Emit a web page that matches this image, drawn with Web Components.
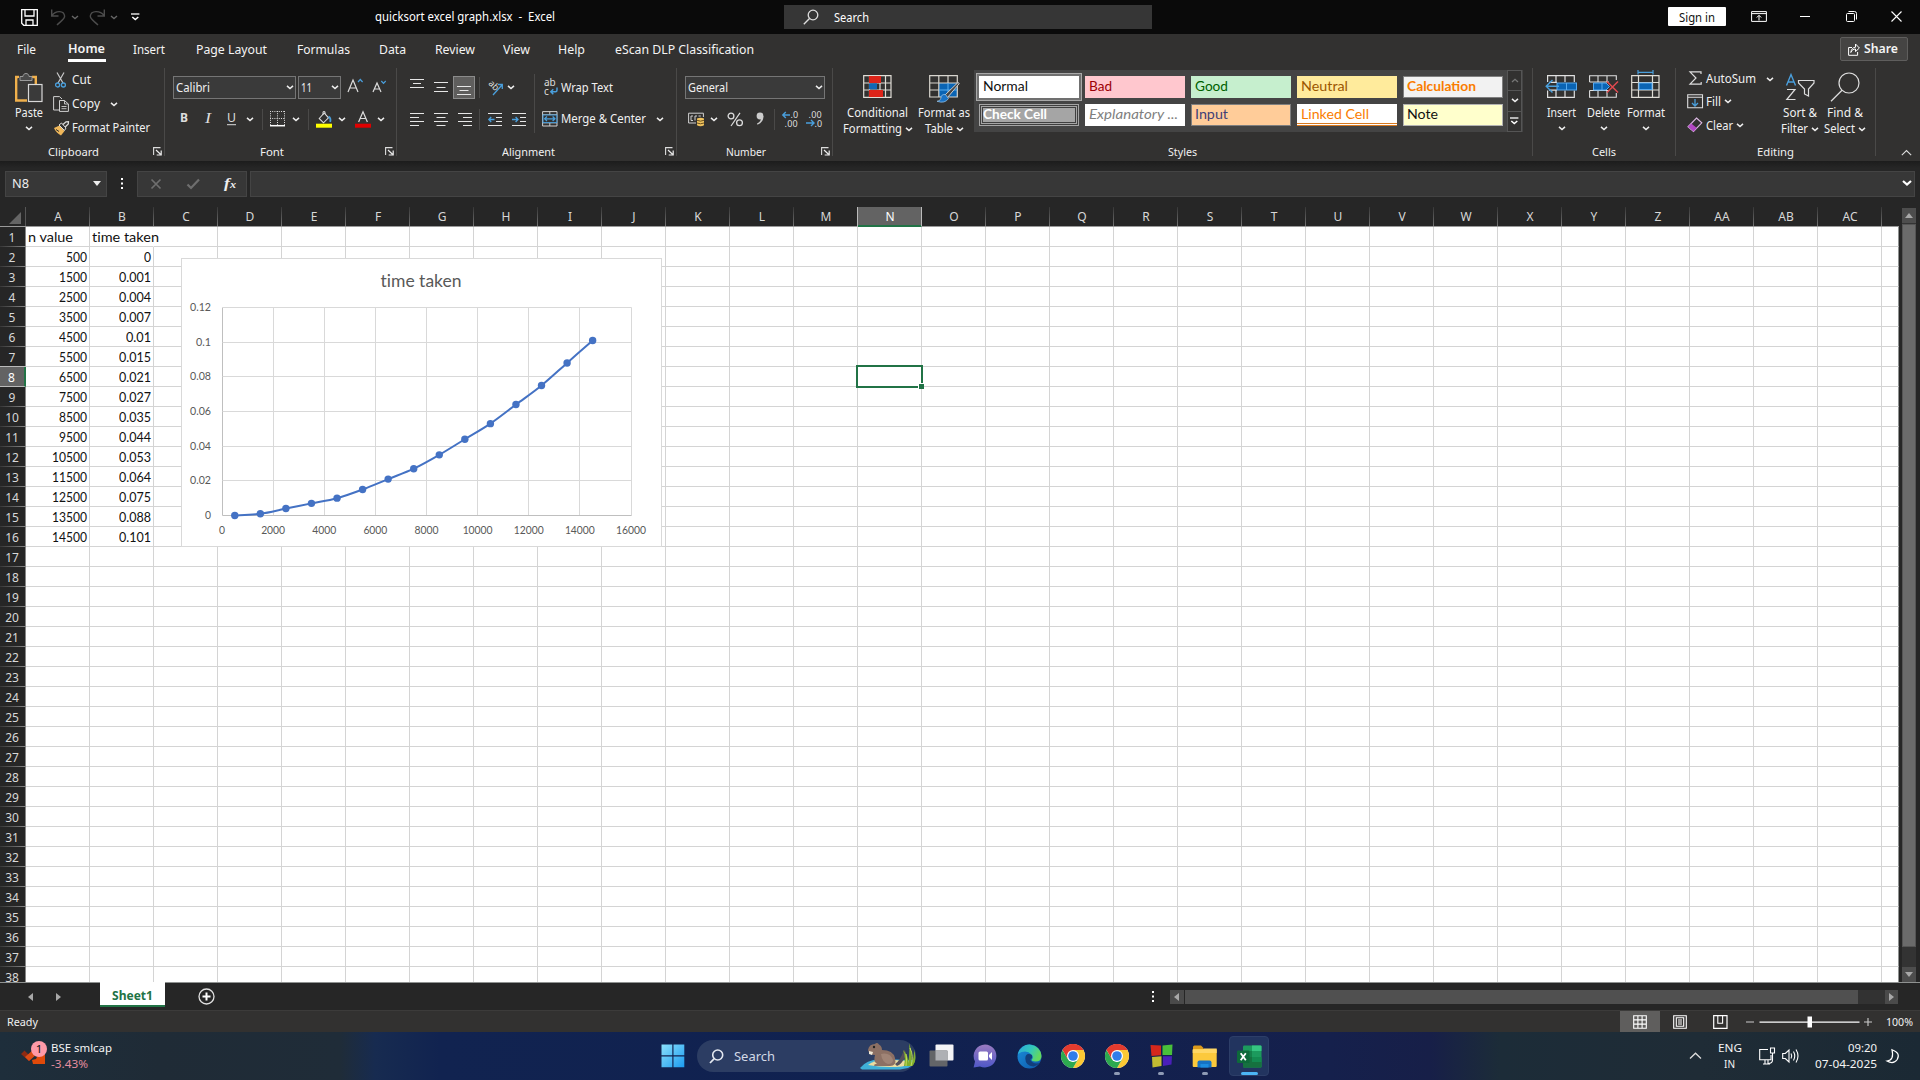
<!DOCTYPE html>
<html lang="en">
<head>
<meta charset="utf-8">
<title>quicksort excel graph.xlsx - Excel</title>
<style>
html,body{margin:0;padding:0;background:#262626;overflow:hidden}
</style>
</head>
<body>
<excel-app></excel-app>
<script>
/* ---------- icon set: [width, height, markup] ---------- */
const W='#e6e6e6', B='#4a9fdc';
const hl=(list,c=W)=>list.map(([x1,x2,y])=>`<path d="M${x1} ${y}H${x2}" stroke="${c}"/>`).join('');
const chrome=`<circle cx="12" cy="12" r="12" fill="#fff"/>
<path d="M12 12L1.6 6A12 12 0 0 1 22.4 6z" fill="#e33b2e"/><path d="M12 6H22.4A12 12 0 0 1 12 24L17.2 15z" fill="#fcc934"/>
<path d="M1.6 6L6.8 15L12 18L17.2 15L12 24A12 12 0 0 1 1.6 6z" fill="#2da94f"/><path d="M1.6 6A12 12 0 0 1 22.4 6H12V12L6.8 15z" fill="#e33b2e"/>
<circle cx="12" cy="12" r="6" fill="#fff"/><circle cx="12" cy="12" r="4.8" fill="#2f7de9"/>`;
const ICONS={
chev:[8,5,`<path d="M1 .9L4 3.6L7 .9" stroke="#eee" stroke-width="1.5"/>`],
chevd:[8,5,`<path d="M1 .9L4 3.6L7 .9" stroke="#666" stroke-width="1.3"/>`],
chevu:[8,5,`<path d="M1 4L4 1.3L7 4" stroke="#777" stroke-width="1.3"/>`],
chevb:[10,6,`<path d="M1 1L5 4.6L9 1" stroke="#fff" stroke-width="2.2"/>`],
chevup:[13,8,`<path d="M1 6.5L6.5 1.2L12 6.5" stroke="#ddd" stroke-width="1.3"/>`],
tri:[8,5,`<path d="M0 0H8L4 5z" fill="#eee"/>`],
dots:[3,12,`<path d="M0 0h2v2H0zM0 4.5h2v2H0zM0 9h2v2H0z" fill="#fff"/>`],
save:[17,17,`<path d="M.7.7H16.3V16.3H2.7L.7 14.3z" stroke="#fff" stroke-width="1.3"/><path d="M4 .7V7H13V.7M5 16V11H12V16" stroke="#fff" stroke-width="1.3"/>`],
undo:[15,17,`<path d="M.7.5V7H7.5M1 6.5C5 1 13 1.5 13.6 7C14 10 10 12 6 16" stroke="#4c4c4c" stroke-width="1.4"/>`],
redo:[16,17,`<path d="M15.3.5V7H8.5M15 6.5C11 1 2 1.5 1.3 7C1 10 5 12 9 16" stroke="#4c4c4c" stroke-width="1.4"/>`],
qat:[9,8,`<path d="M0 1H8.4" stroke="#fff" stroke-width="1.3"/><path d="M1.3 4L4.3 6.6L7.3 4" stroke="#fff" stroke-width="1.5"/>`],
mag:[16,16,`<circle cx="10" cy="6" r="4.8" stroke="#ddd" stroke-width="1.3"/><path d="M6.5 9.5L.8 15.2" stroke="#ddd" stroke-width="1.4"/>`],
ribopt:[16,11,`<path d="M.6.6H15.4V10.4H.6zM.6 2.6H15.4" stroke="#fff"/><path d="M8 9.5V4.5M5.8 6.5L8 4.3L10.2 6.5" stroke="#fff"/>`],
min:[11,2,`<path d="M0 .5H10" stroke="#fff"/>`],
rest:[11,11,`<rect x=".5" y="2.5" width="8" height="8" rx="1" stroke="#fff"/><path d="M2.5 .5H8.5Q10.5.5 10.5 2.5V8.5" stroke="#fff"/>`],
close:[11,11,`<path d="M.5.5L10.5 10.5M10.5.5L.5 10.5" stroke="#fff" stroke-width="1.1"/>`],
share:[12,13,`<path d="M4 4.5H.6V12.3H9.6V9" stroke="#fff"/><path d="M2.8 9.5C3.3 6 5 4.3 7.5 4.2V1L11.4 5L7.5 8.6V6C5.5 6 4 7 2.8 9.5z" stroke="#fff"/>`],
paste:[28,30,`<path d="M4 5H1.2V28.5H12" stroke="#f0b04c" stroke-width="2.4"/><path d="M17 5H20.8V12" stroke="#f0b04c" stroke-width="2.4"/><rect x="3" y="6" width="15" height="21" fill="#3a3938"/><path d="M5 8.5V4.5H8C8 .5 14 .5 14 4.5H17V8.5z" fill="#4a4a4a" stroke="#9a9a9a"/><rect x="13.5" y="12.5" width="13.5" height="17" fill="#3a3a3a" stroke="#d8d8d8" stroke-width="1.2"/>`],
cut:[11,16,`<path d="M2 .5L8 11M9 .5L3 11" stroke="#c8c8c8" stroke-width="1.2"/><circle cx="2.6" cy="13" r="2" stroke="${B}" stroke-width="1.3"/><circle cx="8.4" cy="13" r="2" stroke="${B}" stroke-width="1.3"/>`],
copy:[16,16,`<path d="M6 14H.6V.6H6.5L9 3" stroke="#d0d0d0"/><path d="M6.5 4.5H11.5L15.4 8V15.4H6.5z" fill="#323130" stroke="#d0d0d0"/><path d="M11.5 4.5V8H15.4M8.5 10.5H13.5M8.5 12.7H13.5" stroke="#d0d0d0" stroke-width=".9"/>`],
brush:[17,15,`<path d="M1 7L6.5 4.5L11.5 10L8 14.5Q3 12 1 7z" fill="#efb75a"/><path d="M6 4L8.5 2L13 7L11.5 9.5z" fill="#323130" stroke="#ddd"/><path d="M10 3.5L13 .8L15.5.6L15.3 3L12.2 6" stroke="#ddd" stroke-width="1.2"/><path d="M3 8.5L6 10.5" stroke="#323130"/>`],
launch:[10,9,`<path d="M7.5.6H.6V8" stroke="#ddd" stroke-width="1.1"/><path d="M3 3L7.5 7.2M8.2 3.5V8H3.7" stroke="#eee" stroke-width="1.2"/>`],
grow:[17,15,`<path d="M1 14L6 2L11 14M2.8 10H9.2" stroke="#ddd" stroke-width="1.2"/><path d="M11 4L13.3 1.5L15.6 4" stroke="${B}" stroke-width="1.2"/>`],
shrink:[15,13,`<path d="M1 12L5 3L9 12M2.4 9H7.6" stroke="#ddd" stroke-width="1.2"/><path d="M9.3 1L11.5 3.3L13.7 1" stroke="${B}" stroke-width="1.2"/>`],
bord:[15,16,`<path d="M.5 0V15M14.5 0V15M0 .5H15M7.5 0V15M0 7.5H15" stroke="#ddd" stroke-dasharray="1 1.2"/><path d="M0 14.7H15" stroke="#fff" stroke-width="1.5"/>`],
fill:[17,17,`<path d="M3.2 7.5L8.2 2L12.5 6.8L7.5 11.8z" stroke="#ddd" stroke-width="1.1"/><path d="M7 4V.7H9V3" stroke="#ddd"/><path d="M12.5 5.5Q15.2 7 14.2 11" stroke="${B}" stroke-width="1.8"/><rect y="12.7" width="16" height="4" fill="#ffff00"/>`],
fcol:[17,17,`<path d="M3.6 11L8 .8L12.4 11M5.2 7.5H10.8" stroke="#ddd" stroke-width="1.2"/><rect y="12.7" width="16" height="4" fill="#e00000"/>`],
at:[15,11,hl([[0,14,.5],[3,11,4.5],[0,14,8.5]])],
am:[15,11,hl([[0,14,.5],[2.5,11.5,5.5],[0,14,9.5]])],
ab:[15,11,hl([[0,14,1.5],[2.5,11.5,5.5],[0,14,9.5]])],
al:[15,15,hl([[0,14,1.5],[0,9,5.5],[0,14,9.5],[0,9,13.5]])],
ac:[15,15,hl([[0,14,1.5],[2.5,11.5,5.5],[0,14,9.5],[2.5,11.5,13.5]])],
ar:[15,15,hl([[0,14,1.5],[5,14,5.5],[0,14,9.5],[5,14,13.5]])],
orient:[17,17,`<text transform="translate(1,5) rotate(45)" font-family="Noto Sans" font-size="9.5" fill="#ddd" textLength="10.5" lengthAdjust="spacingAndGlyphs">ab</text><path d="M6 16L15 6M10.8 5.5H15.3V10" stroke="${B}" stroke-width="1.3"/>`],
outd:[15,15,hl([[0,14,1.5],[8,14,5.5],[8,14,9.5],[0,14,13.5]])+`<path d="M6.5 7.5H.8M3.2 5L.8 7.5L3.2 10" stroke="${B}" stroke-width="1.3"/>`],
ind:[15,15,hl([[0,14,1.5],[8,14,5.5],[8,14,9.5],[0,14,13.5]])+`<path d="M0 7.5H6M3.6 5L6 7.5L3.6 10" stroke="${B}" stroke-width="1.3"/>`],
wrap:[15,17,`<text x="0" y="7" font-family="Noto Sans" font-size="10" fill="#ddd">ab</text><text x="0" y="15.5" font-family="Noto Sans" font-size="10" fill="#ddd">c</text><path d="M13 8.5V11Q13 12.8 11.5 12.8H7M9.3 10.3L6.8 12.8L9.3 15.3" stroke="${B}" stroke-width="1.5"/>`],
merge:[16,16,`<path d="M.6.6H15V15H.6zM.6 3.8H15M.6 11.8H15M7.8.6V3.8M7.8 11.8V15" stroke="#d0d0d0"/><rect x="1" y="4" width="13.8" height="7.6" fill="#323130" stroke="${B}"/><path d="M2.5 7.8H13M5 5.5L2.6 7.8L5 10M10.6 5.5L13 7.8L10.6 10" stroke="${B}" stroke-width="1.2"/>`],
cur:[17,15,`<path d="M8 11H.6V1.2H15.4V5" stroke="#d0d0d0"/><path d="M5 4H3V8.5H5M7 8.5V4H9M10.5 4H12.8" stroke="#d0d0d0"/><path d="M9 6.5Q12.5 5 16 6.5V13.3Q12.5 15 9 13.3z" fill="#f0c35f"/><path d="M9 8.3Q12.5 10 16 8.3M9 11Q12.5 12.6 16 11" stroke="#6a501c"/>`],
pct:[17,15,`<circle cx="4" cy="4" r="2.9" stroke="#ddd" stroke-width="1.3"/><circle cx="12.5" cy="10.8" r="2.9" stroke="#ddd" stroke-width="1.3"/><path d="M13 .8L4 14" stroke="#ddd" stroke-width="1.2"/>`],
comma:[9,14,`<circle cx="4" cy="4" r="3.4" fill="#ccc"/><path d="M7.4 4Q7.8 10 1.5 12.8L1 11.5Q5 9.5 5 6z" fill="#ccc"/>`],
decl:[17,16,`<text x="8.6" y="6.8" font-family="Noto Sans" font-size="9" fill="#ddd">.0</text><text x="2.6" y="15.6" font-family="Noto Sans" font-size="9" fill="#ddd" textLength="13">.00</text><path d="M8 4H.8M3.8 1L.8 4L3.8 7" stroke="${B}" stroke-width="1.4"/>`],
decr:[17,16,`<text x="2.6" y="6.8" font-family="Noto Sans" font-size="9" fill="#ddd" textLength="13">.00</text><text x="8.6" y="15.6" font-family="Noto Sans" font-size="9" fill="#ddd">.0</text><path d="M0 12H8M5 9L8 12L5 15" stroke="${B}" stroke-width="1.4"/>`],
cond:[29,23,`<path d="M.7.7H28V22.3H.7zM.7 8H28M.7 15H28M6.5.7V22M17 .7V22M22.5.7V22" stroke="#e0ddd6" stroke-width="1.2"/><rect x="6" y="1" width="12" height="7" fill="#dd2419"/><rect x="6" y="8.3" width="8" height="6" fill="#1267b4"/><rect x="6" y="15" width="14" height="7" fill="#dd2419"/>`],
fmt:[31,28,`<rect x="10" y="8" width="18" height="14" fill="#0a64b4"/><path d="M.7.7H28.3V22H.7zM.7 8H28.3M.7 15H10M9.8.7V22M19 .7V8" stroke="#d8d5ce" stroke-width="1.2"/><path d="M10 15H28M19 8V22" stroke="#58aef0"/><path d="M29 7.5L16 20L18.5 22.5L30.3 8.5z" fill="#444" stroke="#ccc"/><path d="M16.5 19.5Q12 19 12 23Q11.5 26 8 26.3Q16 29 19.5 23.5z" fill="#1a72c4" stroke="#9fc8ea" stroke-width=".7"/>`],
ins:[33,23,`<path d="M2.6 7V.7H29.3V7M2.6 15.5V22.3H29.3V15.5M11 .7V7M20 .7V7M11 15.5V22.3M20 15.5V22.3M4 7.4H12M4 15.2H12" stroke="#e0e0e0" stroke-width="1.2"/><rect x="12" y="8" width="19.5" height="7" fill="#0a64b4" stroke="#57aaf0"/><path d="M21.5 8V15" stroke="#57aaf0"/><path d="M1 11.3H14M7.5 5L1.2 11.3L7.5 17.6" stroke="${B}" stroke-width="1.4"/>`],
del:[32,23,`<path d="M1.6 7V.7H28.3V5M1.6 15.5V22.3H28.3V18M10 .7V7M19 .7V7M10 15.5V22.3M19 15.5V22.3M1.6 7H21M1.6 15.5H21" stroke="#e0e0e0" stroke-width="1.1"/><path d="M5.5 8H18L21.5 11.5L18 15H5.5z" fill="#0a64b4" stroke="#57aaf0"/><path d="M14 8V15" stroke="#57aaf0"/><path d="M19 6.5L30 17.5M30 6.5L19 17.5" stroke="#e04a50" stroke-width="1.5"/>`],
form:[29,28,`<path d="M7 2.3H22M7 0V4.6M22 0V4.6" stroke="${B}" stroke-width="1.2"/><path d="M.7 5.7H28V27.3H.7zM.7 12.5H28M.7 20H28M7.5 5.7V27M21.5 5.7V27" stroke="#e0ddd6" stroke-width="1.2"/><rect x="8" y="13" width="13" height="6.5" fill="#0a64b4" stroke="#57aaf0"/>`],
sum:[13,14,`<path d="M12 3V.8H1L7 7L1 13.2H12.2V11" stroke="#ddd" stroke-width="1.2"/>`],
dfill:[17,15,`<path d="M.7.7H15.5V13.8H.7zM.7 3.3H15.5" stroke="#ddd" stroke-width="1.1"/><path d="M8 5V12M5 9L8 12L11 9" stroke="${B}" stroke-width="1.3"/>`],
clear:[16,16,`<path d="M9.5 1L14.8 5.8L6.5 14.5L1 9.8z" stroke="#dcb8e4" stroke-width="1.1"/><path d="M4.3 6.5L9.8 11L6.5 14.5L1 9.8z" fill="#b146c2"/>`],
sort:[30,28,`<path d="M1.5 12.5L6 1.5L10.5 12.5M3 9H9" stroke="${B}" stroke-width="1.4"/><path d="M2 16.5H10L1.8 26.5H10.5" stroke="#ddd" stroke-width="1.2"/><path d="M13.5 7.5H29V10L23.5 16V23L19.5 21V16L13.5 10z" stroke="#ddd" stroke-width="1.2"/>`],
find:[30,30,`<circle cx="19" cy="11" r="10" stroke="#ddd" stroke-width="1.2"/><path d="M12 18.3L1 29.3" stroke="#ddd" stroke-width="1.3"/>`],
x:[12,12,`<path d="M1.5 1.5L10.5 10.5M10.5 1.5L1.5 10.5" stroke="#6e6e6e" stroke-width="1.7"/>`],
check:[15,12,`<path d="M1.5 6.5L5 10L13 1.5" stroke="#6e6e6e" stroke-width="2.2"/>`],
corner:[12,12,`<path d="M12 0V12H0z" fill="#656565"/>`],
up:[8,5,`<path d="M0 5L4 0L8 5z" fill="#a8a8a8"/>`],
dn:[8,5,`<path d="M0 0H8L4 5z" fill="#a8a8a8"/>`],
lt:[5,8,`<path d="M5 0V8L0 4z" fill="#a8a8a8"/>`],
rt:[5,8,`<path d="M0 0V8L5 4z" fill="#a8a8a8"/>`],
plus:[17,17,`<circle cx="8.5" cy="8.5" r="7.5" stroke="#e0e0e0" stroke-width="1.3"/><path d="M8.5 4.5V12.5M4.5 8.5H12.5" stroke="#fff" stroke-width="2"/>`],
vnorm:[14,14,`<path d="M.7.7H13.3V13.3H.7zM4.9.7V13.3M9.1.7V13.3M.7 4.9H13.3M.7 9.1H13.3" stroke="#fff" stroke-width="1.1"/>`],
vpage:[14,14,`<path d="M.7.7H13.3V13.3H.7zM3.3 2.8H10.7V11.2H3.3z" stroke="#fff" stroke-width="1.1"/><path d="M5 5H9M5 7H9M5 9H9" stroke="#fff"/>`],
vbreak:[15,14,`<path d="M.7.7H14V13.3H.7z" stroke="#fff" stroke-width="1.2"/><path d="M4.8.7V8.3H9.6V.7M9.6 8.3H10" stroke="#fff" stroke-width="1.1"/>`],
zoom:[126,13,`<path d="M0 7H8M118 7H126M122 3V11" stroke="#ccc" stroke-width="1.1"/><path d="M13.5 7.2H113.5" stroke="#fff" stroke-width="1.2"/><rect x="61.5" y="1.5" width="4.5" height="11" fill="#fff"/>`],
stock:[26,24,`<path d="M0 13L3.5 9.5L8 14L14 7L17 11L8 20z" fill="#8e2a12"/><path d="M4 16L12 9L16 13L8 20z" fill="#d94b16"/><path d="M12 23L11 19L15 18L17 14H24V23z" fill="#e04a0a"/><circle cx="18" cy="8" r="8" fill="#ff9aa8"/><text x="18" y="12" font-family="Noto Sans" font-size="11.5" fill="#111" text-anchor="middle">1</text>`],
win:[24,24,`<defs><linearGradient id="wg" x1="0" y1="0" x2="1" y2="1"><stop offset="0" stop-color="#8be0fb"/><stop offset="1" stop-color="#1b9bf0"/></linearGradient></defs><path d="M.5.5H11.3V11.3H.5zM12.5.5H23.3V11.3H12.5zM.5 12.5H11.3V23.3H.5zM12.5 12.5H23.3V23.3H12.5z" fill="url(#wg)"/>`],
smag:[15,15,`<circle cx="8.7" cy="6" r="5" stroke="#e4e8f0" stroke-width="1.6"/><path d="M5 9.8L1 14" stroke="#e4e8f0" stroke-width="1.8"/>`],
beaver:[57,28,`<path d="M0 26Q6 18 20 17L52 18Q56 22 48 26L40 27.5H2z" fill="#3fb0d8"/><path d="M8 23Q14 18 26 17.5L50 19Q52 23 42 24.5Q24 26 8 23z" fill="#ecdca0"/><path d="M35 22Q40 19 44 8Q47 9 45 15Q42 22 37 24z" fill="#55505c"/><path d="M8 8Q9 2 15 2Q17 0 19 2.5Q22 4 22 8Q33 8 35 16Q37 24 30 24H15Q12 23 17 21.5Q13 20 15 13Q9 13 8 8z" fill="#8c7064"/><path d="M21 12Q30 10 33 18Q33 22 28 22Q22 20 21 12z" fill="#a08476"/><circle cx="14" cy="5" r="1.2" fill="#222"/><path d="M9 9L13 10L12 13L9 12z" fill="#f2ead8"/><path d="M44 24Q46 14 43 8Q49 14 48 22Q50 12 49 1Q53 10 51 22Q55 14 54 7Q57 16 54 24z" fill="#7fae2e"/><path d="M46 24Q47 16 46 12M51 24Q54 14 50 6" stroke="#c4dc5a"/>`],
tview:[25,24,`<rect x="6.5" y=".5" width="18" height="16" rx="1" fill="#f4f4f6"/><rect x=".5" y="6.5" width="18" height="16" rx="1" fill="#636568"/><rect x="6.5" y="6.5" width="12" height="10" fill="#aeb0b4"/>`],
chat:[24,24,`<defs><linearGradient id="cg" x1="0" y1="0" x2="0" y2="1"><stop offset="0" stop-color="#9a7bc0"/><stop offset="1" stop-color="#4f58c8"/></linearGradient></defs><path d="M12 .5A11.5 11.5 0 1 1 7 22.4L.6 23.4L2 17.5A11.5 11.5 0 0 1 12 .5z" fill="url(#cg)"/><rect x="5.5" y="7.5" width="9.5" height="9" rx="1.5" fill="#fff"/><path d="M16 11L19 8V16L16 13z" fill="#fff"/>`],
edge:[25,25,`<defs><linearGradient id="eg" x1="0" y1="0" x2="1" y2=".4"><stop offset="0" stop-color="#2aa7e0"/><stop offset=".6" stop-color="#34c8b8"/><stop offset="1" stop-color="#62d860"/></linearGradient><linearGradient id="eb" x1="0" y1="0" x2="1" y2="1"><stop offset="0" stop-color="#1b8fdc"/><stop offset="1" stop-color="#0d57a8"/></linearGradient></defs><circle cx="12.5" cy="12.5" r="12" fill="url(#eb)"/><path d="M15 10.8Q8.5 8 8.3 14.5Q8.5 22 16.5 22.5Q20.5 22 22.5 19Q16 20.5 13.5 16Q13.2 14.5 15 14.2z" fill="#123f7c"/><path d="M.8 10A12 12 0 0 1 24.5 12Q24.5 17.5 18.5 17.5Q14 17.4 14.8 15.5Q17 13 14.5 10.4Q9 5 .8 10z" fill="url(#eg)"/>`],
chrome:[24,24,chrome],
bb:[23,24,`<path d="M.5 1L11 1.5V11.3L1.5 12z" fill="#d5281c"/><path d="M12.5 1.5L22.5.5L22 11H12.5z" fill="#49bf3a"/><path d="M2 13L11.5 12.3V22L2.5 23.5z" fill="#c2bc32"/><path d="M13 12.3H22L21.5 20.5L13 22z" fill="#4a1fb8"/>`],
folder:[25,24,`<path d="M1 3Q1 1.5 2.5 1.5H9L11.5 4V8H1z" fill="#dc9a1c"/><rect x=".7" y="5" width="24" height="18" rx="1" fill="#fcc93c"/><path d="M.7 5.5H11L12 4.6H24.7V9H.7z" fill="#ffd765"/><path d="M5.5 23.5V18.5Q5.5 16.5 7.5 16.5H17.5Q19.5 16.5 19.5 18.5V23.5z" fill="#1672c4"/><path d="M8.5 23.5V20H16.5V23.5z" fill="#1d8ce0"/>`],
xl:[25,24,`<rect x="6" y=".5" width="18.5" height="22" rx="1.2" fill="#1c9a5d"/><path d="M15 .5H23.5Q24.5.5 24.5 1.5V6H15z" fill="#35c481"/><path d="M6 6H15V12H6z" fill="#14804a"/><path d="M6 12H24.5V22.5H6z" fill="#16713f"/><path d="M15 12H24.5V17H15z" fill="#138a50"/><rect y="5.5" width="12.5" height="12.5" rx="1" fill="#0d6a3a"/><path d="M3.7 8.3L8.8 15.3M8.8 8.3L3.7 15.3" stroke="#fff" stroke-width="1.8"/>`],
net:[17,18,`<path d="M9 2.5H.7V12.8H12V8M4 17H11M6 13V17M9 13V17" stroke="#fff" stroke-width="1.1"/><path d="M11.5 1H15.5V6H11.5zM13.5 6V13Q13.5 16.5 9 16.5" stroke="#fff" stroke-width="1.1"/>`],
spk:[18,16,`<path d="M.7 5.5H3.3L7 2V14L3.3 10.5H.7z" stroke="#fff" stroke-width="1.1"/><path d="M9 5.5Q10.5 8 9 10.5M11.5 3.5Q14 8 11.5 12.5M14 1.5Q18 8 14 14.5" stroke="#fff" stroke-width="1.1"/>`],
moon:[13,15,`<path d="M6 .8Q15 4 11.2 10.5Q7.5 15.8 1 12Q8.5 11 6 .8z" stroke="#fff" stroke-width="1.2"/>`]
};

class IconGlyph extends HTMLElement{
  connectedCallback(){
    if(this.shadowRoot)return;
    const [w,h,m]=ICONS[this.getAttribute('n')];
    this.attachShadow({mode:'open'}).innerHTML=`<style>:host{display:block;flex:none;width:${w}px;height:${h}px}svg{display:block;overflow:visible}</style><svg width="${w}" height="${h}" viewBox="0 0 ${w} ${h}" fill="none">${m}</svg>`;
  }
}
customElements.define('icon-glyph',IconGlyph);

/* One line of text condensed or widened to the width in its "w" attribute; --dy nudges its baseline */
class FitText extends HTMLElement{
  connectedCallback(){
    if(this.shadowRoot)return;
    const w=+this.getAttribute('w'),s=this.getAttribute('s')||11.8;
    this.attachShadow({mode:'open'}).innerHTML=`<style>:host{display:block;flex:none;width:${w}px;font-size:${s}px;line-height:16px;white-space:nowrap}span{display:inline-block;transform-origin:0 50%}</style><span><slot></slot></span>`;
    const sp=this.shadowRoot.querySelector('span'),n=sp.getBoundingClientRect().width;
    if(n)sp.style.transform=`translateY(var(--dy,0px)) scaleX(${(w/n).toFixed(4)})`;
  }
}
customElements.define('fit-text',FitText);

const T=(w,t,s,st='')=>`<fit-text w="${w}" ${s?`s="${s}"`:''} style="${st}">${t}</fit-text>`;
const I=(n,st='')=>`<icon-glyph n="${n}" style="${st}"></icon-glyph>`;
/* A run of items in a flex row: each is [left edge, width, markup]; the gaps become margins */
const run=(cur,items)=>items.map(([x,w,m,st=''])=>{const g=x-cur;cur=x+w;return `<div class="it" style="margin-left:${g}px;width:${w}px;${st}">${m}</div>`}).join('');
const BASE=`*{box-sizing:border-box}.r{display:flex;align-items:center}.it{flex:none;display:flex;align-items:center}`;
const make=(name,css,html)=>customElements.define(name,class extends HTMLElement{
  connectedCallback(){if(!this.shadowRoot)this.attachShadow({mode:'open'}).innerHTML=`<style>${BASE}${css}</style>${html}`}
});

make('title-bar',`:host{display:flex;align-items:center;height:34px;background:#0a0a0a;color:#fff}`,
 run(0,[[20.5,17,I('save')],[51,15,I('undo')],[71,8,I('chevd')],[89,16,I('redo')],[110,8,I('chevd')],[131,9,I('qat')],
 [375,180,T(180,'quicksort excel graph.xlsx&nbsp; -&nbsp; Excel',11.8,'--dy:-1px')],
 [784,368,`<div style="margin-left:19px">${I('mag')}</div><div style="margin-left:15px">${T(35,'Search',11.8)}</div>`,'height:24px;background:#363636'],
 [1668,58,T(36,'Sign in',11.8),'height:19px;background:#fff;color:#111;justify-content:center;margin-top:-1px;border-radius:1px'],
 [1751,16,I('ribopt'),'margin-top:-2px'],[1800,11,I('min'),'margin-top:-1px'],[1845.5,11,I('rest'),'margin-top:-2px'],[1891,11,I('close'),'margin-top:-2px']]));

make('ribbon-tabs',`:host{display:flex;align-items:center;height:34px;background:#323130;color:#f4f4f4}fit-text{margin-top:-2px}`,
 run(0,[[17,19,T(19,'File',12.6)],[68,38,T(37,'<b style="font-weight:600">Home</b>',12.6,'margin-top:0;margin-left:-1px')+'<i style="width:38px;height:3px;background:#fff;margin-top:2px;display:block;flex:none"></i>','height:34px;flex-direction:column;padding-top:7px'],[133,32,T(32,'Insert',12.6)],[196,71,T(71,'Page Layout',12.6)],[297,53,T(53,'Formulas',12.6)],[379,27,T(27,'Data',12.6)],[435,40,T(40,'Review',12.6)],[503,27,T(27,'View',12.6)],[558,27,T(27,'Help',12.6)],[615,139,T(139,'eScan DLP Classification',12.6)],
 [1840,68,I('share')+T(34,'<b style="font-weight:600">Share</b>',12.2,'margin-top:0;margin-left:4px'),'height:24px;background:#454443;border:1px solid #5f5e5d;border-radius:2px;padding-left:7px;margin-top:-4px']]));

/* Ribbon group: body slot above a centred label with an optional launcher */
customElements.define('ribbon-group',class extends HTMLElement{
  connectedCallback(){
    if(this.shadowRoot)return;
    const w=this.getAttribute('width');
    this.attachShadow({mode:'open'}).innerHTML=`<style>*{box-sizing:border-box}:host{display:flex;flex-direction:column;flex:none;width:${w}px;height:93px}
    .m{display:flex;flex:none;height:88px;border-right:1px solid #4a4948;flex-direction:column}
    .b{height:72px;flex:none;display:flex;align-items:flex-start;--dy:-.8px}.f{display:flex;align-items:center;height:17px;flex:none;margin-top:3px}.l{flex:1;display:flex;justify-content:center}.g{width:17px;flex:none;padding-left:6px}</style>
    <div class="m"><div class="b"><slot></slot></div><div class="f"><div class="l">${T(this.getAttribute('lw'),this.getAttribute('label'),11)}</div>${this.hasAttribute('launcher')?`<div class="g">${I('launch')}</div>`:''}</div></div>`;
  }
});

/* Tall button: icon on top of two caption lines */
const big=(w,icon,pt,l1w,l1,l2)=>`<div style="width:${w}px;flex:none;display:flex;flex-direction:column;align-items:center;box-sizing:border-box"><div style="height:37px;padding-top:${pt}px;box-sizing:border-box">${I(icon)}</div><div style="height:16px;display:flex;align-items:center">${T(l1w,l1,11.8)}</div><div style="height:16px;display:flex;align-items:center">${l2}</div></div>`;
const two=(w,t)=>T(w,t,11.8)+I('chev','margin-left:3px');
const SEP=x=>[x,1,'','height:21px;background:#4a4948'];
const FIELD='height:23px;border:1px solid #757575;background:#3a3a3a';
const rows=(a,b,start,extra='')=>`<div style="flex:none;padding-top:8px;${extra}"><div class="r" style="height:23px">${run(start,a)}</div><div class="r" style="height:24px;margin-top:8px">${run(start,b)}</div></div>`;

const clip=`<div style="width:53px;flex:none;display:flex"><div style="margin-left:2px;flex:none">${big(54,'paste',4,28,'Paste',I('chev','margin-top:-2px'))}</div></div>
<div style="flex:none"><div class="r" style="height:24px">${run(53,[[55,11,I('cut')],[72,19,T(19,'Cut')]])}</div><div class="r" style="height:24px">${run(53,[[53,16,I('copy')],[72,28,T(28,'Copy')],[109.5,8,I('chev')]])}</div><div class="r" style="height:24px">${run(53,[[53,17,I('brush')],[72,78,T(78,'Format Painter')]])}</div></div>`;

const font=rows([[173,123,T(34,'Calibri',11.8,'margin-left:2px')+I('chev','margin-left:76px'),FIELD],[298,43,T(11,'11',11.8,'margin-left:2px')+I('chev','margin-left:18.5px'),FIELD],[346.5,17,I('grow'),'margin-top:-4px'],[372,15,I('shrink'),'margin-top:-2px']],
[[180,9,T(8,'<b>B</b>',12.6,'color:#ddd')],[205,8,T(6,'<i style="font-family:Liberation Serif">I</i>',14,'color:#ddd')],[227,10,T(9,'<u style="text-underline-offset:2px">U</u>',12.6,'color:#ddd')],[245.5,8,I('chev')],SEP(262),[270,15,I('bord')],[291.5,8,I('chev')],SEP(308),[316,17,I('fill')],[337.5,8,I('chev')],[355,17,I('fcol')],[376.5,8,I('chev')]],165);

const align=rows([[409.5,15,I('at'),'margin-top:-6px'],[433.5,15,I('am')],[453,22,I('ab','margin:6px 0 0 3px'),'height:23px;border:1px solid #8b8b8b;background:#5f5e5d'],SEP(479),[487,17,I('orient')],[507,8,I('chev')]].map(a=>a[0]<476?[a[0]+.5,...a.slice(1)]:a),
[[410,15,I('al')],[434,15,I('ac')],[458,15,I('ar')],SEP(479),[488.5,15,I('outd')],[512.5,15,I('ind')]],397.5,'width:137px')+
`<div style="width:1px;height:59px;background:#4a4948;margin-top:6px;flex:none"></div>`+
rows([[544,15,I('wrap')],[561,52,T(52,'Wrap Text')]],[[542,16,I('merge')],[561,85,T(85,'Merge &amp; Center')],[656,8,I('chev')]],535);

const num=rows([[685,140,T(40,'General',11.8,'margin-left:2px')+I('chev','margin-left:87px'),FIELD]],
[[688,17,I('cur')],[709.5,8,I('chev')],[727,17,I('pct')],[755.5,9,I('comma')],SEP(774),[781.5,17,I('decl')],[805.5,17,I('decr')]],677);

/* Cell style gallery */
const sw=(bg,fg,w,t,ex='',s=13.2)=>`<div class="sw" style="background:${bg};color:${fg};${ex}">${T(w,t,s)}</div>`;
make('style-gallery',`:host{display:flex;flex:none;margin-top:2px;height:62px;width:549px;background:#444;font-family:Lato,"Liberation Sans",sans-serif}
.g{display:grid;grid-template-columns:repeat(5,100px);grid-template-rows:22px 22px;gap:6px;padding:6px 0 0 5px;width:533px;flex:none}.sw{display:flex;align-items:center;padding-left:4px;height:22px}
.s{width:15px;display:flex;flex-direction:column}.s div{flex:1;border:1px solid #555;background:#323130;display:flex;align-items:center;justify-content:center;border-top-width:0}`,
`<div class="g">${sw('#fff','#111',45,'Normal','outline:2px solid #707070;box-shadow:0 0 0 3px #a8a8a8')}${sw('#ffc7ce','#9c0006',23,'Bad')}${sw('#c6efce','#006100',33,'Good')}${sw('#ffeb9c','#9c5700',47,'Neutral')}${sw('#f2f2f2','#fa7d00',69,'<b>Calculation</b>','border:1px solid #7f7f7f;padding-left:3px')}
${sw('#a5a5a5','#fff',64,'<b>Check Cell</b>','border:3px double #3f3f3f;outline:1px solid #a5a5a5;margin:1px;height:20px;width:98px;padding-left:0')}${sw('#fff','#7f7f7f',89,'<i>Explanatory ...</i>')}${sw('#ffcc99','#3f3f76',33,'Input','border:1px solid #7f7f7f;padding-left:3px')}${sw('#fff','#fa7d00',68,'Linked Cell','border-bottom:3px double #d87a20;padding-top:3px')}${sw('#ffffcc','#111',31,'Note','border:1px solid #b2b2b2;padding-left:3px')}</div>
<div class="s"><div style="border-top-width:1px">${I('chevu')}</div><div>${I('chev')}</div><div>${I('qat')}</div></div>`);

const styles=`<div style="width:8.5px;flex:none"></div>${big(72,'cond',7,61,'Conditional',two(59,'Formatting'))}<div style="width:.5px;flex:none"></div>${big(60,'fmt',7,52,'Format as',two(28,'Table'))}<style-gallery></style-gallery>`;
const cells=`<div style="width:7.5px;flex:none"></div>${big(42,'ins',7,29,'Insert',I('chev','margin-top:-2px'))}${big(42,'del',7,33,'Delete',I('chev','margin-top:-2px'))}${big(42,'form',2,38,'Format',I('chev','margin-top:-2px'))}`;
const edit=`<div style="flex:none;width:99.5px"><div class="r" style="height:22px">${run(1676,[[1689,13,I('sum'),'margin-top:-2px'],[1706,50,T(50,'AutoSum')],[1765.5,8,I('chev')]])}</div><div class="r" style="height:24px">${run(1676,[[1687,17,I('dfill'),'margin-top:-2px'],[1706,15,T(15,'Fill')],[1723.5,8,I('chev'),'margin-top:-2px']])}</div><div class="r" style="height:23px">${run(1676,[[1687,16,I('clear'),'margin-top:-2px'],[1706,27,T(27,'Clear')],[1735.5,8,I('chev'),'margin-top:-1px']])}</div></div>
${big(48,'sort',5,34,'Sort &amp;',two(27,'Filter'))}${big(42,'find',4,36,'Find &amp;',two(31,'Select'))}`;

make('ribbon-bar',`:host{display:flex;height:93px;background:#323130;color:#f0f0f0;align-items:flex-start}.c{flex:1;height:93px;display:flex;align-items:flex-end;justify-content:flex-end;padding:0 7px 4px 0}`,
`<ribbon-group width="165" label="Clipboard" lw="51" launcher>${clip}</ribbon-group><ribbon-group width="232" label="Font" lw="24" launcher>${font}</ribbon-group><ribbon-group width="280" label="Alignment" lw="53" launcher>${align}</ribbon-group><ribbon-group width="156" label="Number" lw="40" launcher>${num}</ribbon-group><ribbon-group width="700" label="Styles" lw="29">${styles}</ribbon-group><ribbon-group width="143" label="Cells" lw="24">${cells}</ribbon-group><ribbon-group width="200" label="Editing" lw="37">${edit}</ribbon-group><div class="c">${I('chevup','transform:scale(.85)')}</div>`);

const FB='height:26px;background:#373737;border:1px solid #444;';
make('formula-bar',`:host{display:flex;align-items:center;height:46px;background:linear-gradient(#1c1c1c,#262626 7px);color:#eee}`,
 run(0,[[5,102,T(17,'N8',12,'margin-left:6px')+I('tri','margin-left:64px;margin-top:-2px'),FB],[120.5,3,I('dots')],
 [137,110,I('x','margin-left:12px')+I('check','margin-left:24px')+T(12,'<i style="font-family:Liberation Serif;font-weight:bold">f<span style="font-size:10px">x</span></i>',14.5,'margin-left:23px;--dy:-1px'),FB],
 [250,1665,I('chevb','margin-left:1651px;margin-top:-2px'),FB]]));

/* Worksheet */
const DATA=[['n value','time taken'],[500,0],[1500,.001],[2500,.004],[3500,.007],[4500,.01],[5500,.015],[6500,.021],[7500,.027],[8500,.035],[9500,.044],[10500,.053],[11500,.064],[12500,.075],[13500,.088],[14500,.101]];
const COLS=[...'ABCDEFGHIJKLMNOPQRSTUVWXYZ','AA','AB','AC'];
customElements.define('scatter-chart',class extends HTMLElement{
  connectedCallback(){
    if(this.shadowRoot)return;
    const X=n=>41+n/16000*409,Y=v=>257.5-v/.12*208;
    let g='';
    for(let i=0;i<=8;i++){const x=Math.round(X(i*2000)-.5)+.5;g+=`<path d="M${x} 49.5V257.5" stroke="${i?'#d9d9d9':'#bfbfbf'}"/>`;const t=String(i*2000);g+=`<text x="${X(i*2000)-t.length*3}" y="276" textLength="${t.length*6}" lengthAdjust="spacingAndGlyphs">${t}</text>`}
    for(let i=0;i<=6;i++){const y=Math.round(Y(i*.02)-.5)+.5;g+=`<path d="M41.5 ${y}H450.5" stroke="${i?'#d9d9d9':'#bfbfbf'}"/>`;const t=String(+(i*.02).toFixed(2)),w=t.includes('.')?(t.length-1)*6+3:6;g+=`<text x="${30-w}" y="${y+3.8}" textLength="${w}" lengthAdjust="spacingAndGlyphs">${t}</text>`}
    const P=DATA.slice(1).map(([a,b])=>[X(a),Y(b)]);
    let d=`M${P[0]}`;
    for(let i=0;i<P.length-1;i++){const p=P[i-1]||P[i],q=P[i],r=P[i+1],s=P[i+2]||r;d+=`C${q[0]+(r[0]-p[0])/6} ${q[1]+(r[1]-p[1])/6} ${r[0]-(s[0]-q[0])/6} ${r[1]-(s[1]-q[1])/6} ${r}`}
    this.attachShadow({mode:'open'}).innerHTML=`<style>:host{display:block}svg{display:block}text{font:11px Lato,"Liberation Sans",sans-serif;font-variant-ligatures:none;fill:#595959}</style>
    <svg width="481" height="289" fill="none"><rect x=".5" y=".5" width="480" height="288" fill="#fff" stroke="#d9d9d9"/>${g}<path d="${d}" stroke="#4472c4" stroke-width="2"/>${P.map(p=>`<circle cx="${p[0]}" cy="${p[1]}" r="3.7" fill="#4472c4"/>`).join('')}<text x="199.5" y="29" style="font-size:17px" textLength="81" lengthAdjust="spacingAndGlyphs">time taken</text></svg>`;
  }
});
customElements.define('sheet-grid',class extends HTMLElement{
  connectedCallback(){
    if(this.shadowRoot)return;
    const wd=v=>{const t=String(v);return t.includes('.')?(t.length-1)*7+4:t.length*7};
    let head=`<div class="hd"><div class="co">${I('corner')}</div>${COLS.map(c=>`<div class="ch${c=='N'?' on':''}">${c}</div>`).join('')}<div class="ch last"></div></div>`;
    let body='';
    for(let r=1;r<=38;r++){
      const d=DATA[r-1];
      body+=`<div class="row"><div class="rh${r==8?' on':''}">${r}</div>${COLS.map((c,i)=>{
        let m='';
        if(d&&i<2)m=r==1?T(i?67:45,d[i],13.4,'margin-left:2px'):T(wd(d[i]),d[i],13,'margin-left:auto;margin-right:2px');
        return `<div class="c"${r==1&&i==1?' style="border-right-color:#fff"':''}>${m}</div>`}).join('')}<div class="c last"></div></div>`;
    }
    this.attachShadow({mode:'open'}).innerHTML=`<style>*{box-sizing:border-box}:host{display:flex;height:776px;background:#262626;border-bottom:1px solid #8f9291;box-sizing:border-box}
    .sheet{position:relative;width:1899px;height:775px;overflow:hidden;flex:none}
    .hd{display:flex;height:20px;border-bottom:1px solid #999;color:#d8d8d8}
    .co{width:26px;flex:none;padding:5px 0 0 9px;border-right:1px solid #555}
    .ch{width:64px;flex:none;font-size:12px;line-height:20px;text-align:center;padding-left:1px;border-right:1px solid;border-image:linear-gradient(#333,#777) 1}
    .ch.on{background:#636363;color:#fff;border-image:none;border-color:#bbb;box-shadow:-1px 0 #bbb,inset 0 -1px #217346;height:20px;border-bottom:1px solid #217346;position:relative}
    .row{display:flex;height:20px}.rh{width:26px;flex:none;background:#262626;color:#d8d8d8;font-size:12px;line-height:21px;text-align:center;padding-right:1px;border-bottom:1px solid;border-image:linear-gradient(90deg,#333,#888) 1;border-right:1px solid #555}
    .rh.on{background:#636363;color:#fff;border-image:none;border-bottom-color:#bbb;border-right:2px solid #217346;box-shadow:0 -1px #bbb}
    .c{width:64px;flex:none;height:20px;background:#fff;border-right:1px solid #d4d4d4;border-bottom:1px solid #d4d4d4;display:flex;align-items:center;color:#111;padding-top:1px;font-family:Lato,"Liberation Sans",sans-serif;font-variant-ligatures:none}
    .last{width:17px;border-right:1px solid #8f9291}.ch.last{border-image:none;border-color:transparent}
    scatter-chart{position:absolute;left:181px;top:51px}
    .sel{position:absolute;left:856px;top:158px;width:67px;height:23px;border:2px solid #217346}
    .sel i{position:absolute;right:-3px;bottom:-3px;width:6px;height:6px;background:#217346;border:1px solid #fff;border-right:0;border-bottom:0}
    .vs{margin:1px 0 0 3px;width:14px;height:774px;display:flex;flex-direction:column;background:#333}
    .b{height:15px;background:#4d4d4d;display:flex;align-items:center;justify-content:center;flex:none}.th{height:723px;background:#6b6b6b;border:1px solid #555;margin-top:1px;flex:none}</style>
    <div class="sheet">${head}${body}<scatter-chart></scatter-chart><div class="sel"><i></i></div></div>
    <div class="vs"><div class="b">${I('up')}</div><div class="th"></div><div style="flex:1"></div><div class="b">${I('dn')}</div></div>`;
  }
});

make('sheet-tabs',`:host{display:flex;align-items:center;height:27px;background:#262626}`,
 run(0,[[27.5,5,I('lt')],[55.5,5,I('rt')],[100,65,T(41,'<b>Sheet1</b>',12.6,'--dy:1.5px'),'height:25px;background:#fff;border-bottom:2px solid #217346;color:#217346;justify-content:center;align-self:flex-start;margin-top:-1px'],[197.5,17,I('plus')],[1152,3,I('dots')],
 [1169.5,14,I('lt'),'height:14px;background:#4a4a4a;justify-content:center'],[1185,673,'','height:14px;background:#505050'],[1858,27,'','height:14px;background:#323232'],[1885,13,I('rt'),'height:14px;background:#4a4a4a;justify-content:center']]));

make('status-bar',`:host{display:flex;align-items:center;height:22px;background:#323130;color:#f0f0f0;border-top:1px solid #3c3b3a;box-sizing:border-box}`,
 run(0,[[7,31,T(31,'Ready',11)],[1620,40,I('vnorm'),'height:21px;background:#5f5e5d;justify-content:center'],[1673,14,I('vpage')],[1712.5,15,I('vbreak')],[1746,126,I('zoom')],[1885.5,27,T(27,'100%',11)]]));

const app=(n,dot)=>`<div class="app">${I(n)}<i class="${dot||''}"></i></div>`;
const FULL='height:48px;align-items:flex-start;padding-top:4px';
make('task-bar',`:host{display:flex;height:48px;background:linear-gradient(90deg,#1e2e3b 0,#1f2b36 160px,#1f2c38 340px,#172b50 375px,#112350 440px,#102150 900px,#15204c 1330px,#171f48 1430px,#1c2c38 1500px,#1f2c36 1700px,#1b2934 100%);color:#f4f4f4}
.app{width:44px;height:40px;display:flex;flex-direction:column;align-items:center;padding-top:8px}.app i{height:3px;width:6px;border-radius:2px;margin-top:4px;flex:none}.app i.d{background:#8f9bb5}.app i.a{background:#4cb5f5;width:17px;margin-top:3px}`,
 `<div class="r" style="height:48px">`+run(0,[[21,26,I('stock'),'margin-top:-6px'],[51,61,T(61,'BSE smlcap',11.4)+T(37,'-3.43%',11.4,'color:#e58d9f'),'flex-direction:column;align-items:flex-start'],
 [660.5,24,I('win')],[697,219,I('smag','margin-left:12px')+T(41,'Search',13.4,'margin-left:10px;color:#d3d9e6')+I('beaver','margin-left:84.5px'),'height:32px;border-radius:16px;background:#2c3d63;overflow:hidden'],
 [929,25,I('tview')],[973,24,I('chat')],[1017,25,I('edge')],[1061,24,I('chrome')],
 [1095,44,app('chrome','d'),FULL],[1139,44,app('bb','d'),FULL],[1182.5,44,app('folder','d'),FULL],
 [1229,40,`<div class="app" style="width:40px;background:#22345f;border-radius:4px;border:1px solid #2d3e68;padding-top:8px">${I('xl')}<i class="a"></i></div>`,'height:40px'],
 [1689,13,I('chevup')],[1717.5,24,T(24,'ENG',11.4)+T(11,'IN',11.4),'flex-direction:column'],[1759,17,I('net')],[1782,18,I('spk')],[1814.5,62,T(29,'09:20',11.4)+T(62,'07-04-2025',11.4),'flex-direction:column;align-items:flex-end'],[1886,13,I('moon')]])+`</div>`);

make('excel-app',`:host{display:flex;flex-direction:column;width:1920px;height:1080px;overflow:hidden;font-family:"Noto Sans","Open Sans",sans-serif}`,
 `<title-bar></title-bar><ribbon-tabs></ribbon-tabs><ribbon-bar></ribbon-bar><formula-bar></formula-bar><sheet-grid></sheet-grid><sheet-tabs></sheet-tabs><status-bar></status-bar><task-bar></task-bar>`);
</script>
</body>
</html>
